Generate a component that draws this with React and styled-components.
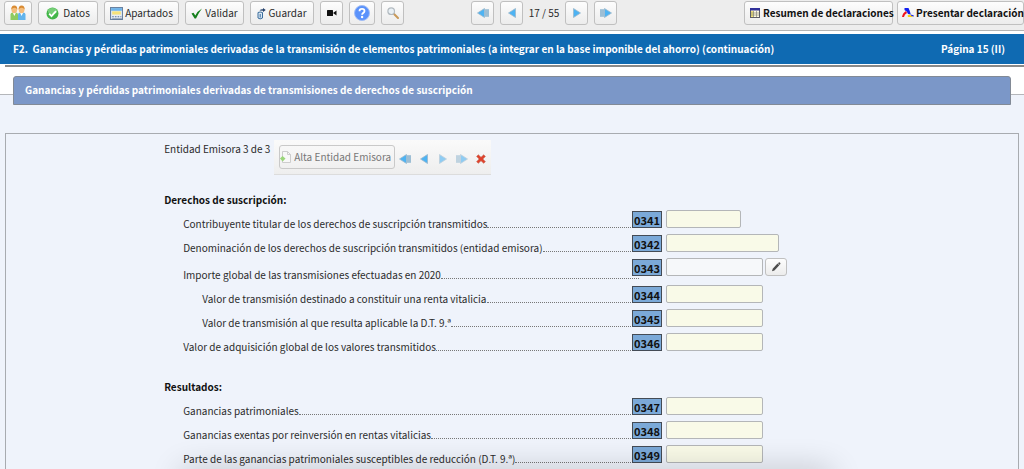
import React from "react";
import styled, { createGlobalStyle } from "styled-components";

const derechos = [
  { code: "0341", text: "Contribuyente titular de los derechos de suscripción transmitidos", width: 75 },
  { code: "0342", text: "Denominación de los derechos de suscripción transmitidos (entidad emisora)", width: 113 },
  { code: "0343", text: "Importe global de las transmisiones efectuadas en 2020", width: 97, edit: true },
  { code: "0344", text: "Valor de transmisión destinado a constituir una renta vitalicia", width: 97, level: 2 },
  { code: "0345", text: "Valor de transmisión al que resulta aplicable la D.T. 9.ª", width: 97, level: 2 },
  { code: "0346", text: "Valor de adquisición global de los valores transmitidos", width: 97 },
];

const resultados = [
  { code: "0347", text: "Ganancias patrimoniales", width: 97 },
  { code: "0348", text: "Ganancias exentas por reinversión en rentas vitalicias", width: 97 },
  { code: "0349", text: "Parte de las ganancias patrimoniales susceptibles de reducción (D.T. 9.ª)", width: 97 },
];

const UsersIcon = () => (
  <svg width="16" height="16" viewBox="0 0 16 16">
    <path d="M0.500 15V9.500Q0.500 7.500 3 7.500H5.500Q8 7.500 8 9.500V15Z" fill="#8ecb62" />
    <path d="M8 15V9.500Q8 7.500 10.500 7.500H13Q15.500 7.500 15.500 9.500V15Z" fill="#62b4ec" />
    <path d="M3 8l1.300 3L5.800 8ZM10.200 8l1.300 3L13 8Z" fill="#fff" />
    <ellipse cx="4.300" cy="4.600" rx="2.900" ry="3.700" fill="#f4bd7c" />
    <ellipse cx="11.600" cy="4.600" rx="2.900" ry="3.700" fill="#f4bd7c" />
    <path d="M1.300 4.500Q1.300 0.500 4.300 0.500T7.300 4.500Q6 2.600 4.300 2.800T1.300 4.500ZM8.600 4.500Q8.600 0.500 11.600 0.500T14.600 4.500Q13.300 2.600 11.600 2.800T8.600 4.500Z" fill="#d98b33" />
  </svg>
);

const OkIcon = () => (
  <svg width="13" height="13" viewBox="0 0 13 13">
    <circle cx="6.500" cy="6.500" r="6" fill="#43b649" />
    <ellipse cx="6.500" cy="4" rx="4.600" ry="3" fill="#8bd98b" opacity=".7" />
    <path d="M3.200 6.700l2.300 2.400 4.500-4.900" fill="none" stroke="#fff" strokeWidth="1.900" />
  </svg>
);

const SectionsIcon = () => (
  <svg width="13" height="13" viewBox="0 0 12 12">
    <rect x=".5" y=".5" width="11" height="11" fill="#e8eef6" stroke="#6a82a0" />
    <path d="M1 1h10v2.500H1z" fill="#6db2e8" />
    <path d="M2 4h8v3H2z" fill="#f5e27a" />
    <path d="M2 9h1.500M4.500 9H6M7 9h1.500M9.500 9h1M2 11h9" stroke="#5c7796" />
  </svg>
);

const CheckIcon = () => (
  <svg width="12" height="11" viewBox="0 0 12 11">
    <path d="M0.500 5.500L2.500 4.800 4.300 7.600Q6.500 3 11 0.500 7.500 5 5 10.500H3.600Z" fill="#15801c" />
  </svg>
);

const SaveIcon = () => (
  <svg width="9" height="13" viewBox="0 0 9 13">
    <path d="M1 5.500Q3 4.500 5.500 5.500V11Q3 12.800 1 11Z" fill="#d9e8f4" stroke="#3a6c9c" />
    <path d="M3.200 7V10.500" stroke="#3a6c9c" />
    <path d="M2.500 3.500Q4 1.800 6 2.300V1L8.700 3 6 5V3.700Z" fill="#25416b" />
  </svg>
);

const VideoIcon = () => (
  <svg width="10" height="6" viewBox="0 0 10 6">
    <rect width="6" height="6" rx=".5" fill="#111" />
    <path d="M6 3L9.500 0.500V5.500Z" fill="#111" />
  </svg>
);

const HelpIcon = () => (
  <svg width="16" height="16" viewBox="0 0 16 16">
    <circle cx="8" cy="8" r="7.500" fill="#5a92fb" stroke="#9fbcf5" />
    <path d="M5.500 6.200Q5.500 3.900 8 3.900T10.500 6Q10.500 7.100 9.300 7.900 8.100 8.600 8.100 9.800" fill="none" stroke="#fff" strokeWidth="1.800" />
    <circle cx="8.100" cy="12" r="1.200" fill="#fff" />
  </svg>
);

const SearchIcon = () => (
  <svg width="12" height="12" viewBox="0 0 12 12">
    <path d="M6.300 6.300L11 11" stroke="#c99a5a" strokeWidth="2" strokeLinecap="round" />
    <circle cx="4.200" cy="4.200" r="3.300" fill="#eaf1f6" stroke="#b3bbc1" strokeWidth="1.200" />
  </svg>
);

const TableIcon = () => (
  <svg width="12" height="10" viewBox="0 0 12 10">
    <rect x="1.500" y=".5" width="9" height="9" fill="#fffbe0" stroke="#5d5d66" />
    <path d="M1 0h10v2.500H1z" fill="#32329a" />
    <path d="M2 3h2.500v6H2z" fill="#f1e37a" />
    <path d="M2 5h8M2 7h8M4.500 3v6M7.500 3v6" stroke="#77776f" strokeWidth=".6" />
  </svg>
);

const AeatIcon = () => (
  <svg width="12" height="10" viewBox="0 0 12 10">
    <path d="M2.500 0H6.500Q8 3 8.800 6.500L6 6Q5.500 3.500 2.500 2Z" fill="#1220f0" />
    <path d="M0 9Q.5 5 4 3L5 5Q2.300 6.500 2 9Z" fill="#f0141e" />
    <path d="M5.500 7.500l2-1 4 2.500H6Z" fill="#fbd313" />
    <path d="M8.500 6.500l3 .8L12 8.500 9.500 8Z" fill="#1220f0" />
  </svg>
);

// arrow used by both pagers; "bar" is the first / last variant
const Arrow = ({ flip, bar, pale }) => (
  <svg width="12" height="12" viewBox="0 0 12 12">
    <g transform={flip ? "matrix(-1 0 0 1 12 0)" : undefined} opacity={pale ? 0.6 : 1}>
      {bar && <path d="M0.500 2.500h1v7h-1zM2.500 2.500h1v7h-1z" fill="#58b8f2" stroke="#9ab7cc" strokeWidth=".8" />}
      <path d={bar ? "M4.500 1.500L11.500 6L4.500 10.500Z" : "M2.500 1.500L9.500 6L2.500 10.500Z"} fill="#4db3f3" stroke="#9ab7cc" strokeWidth=".8" />
    </g>
  </svg>
);

const AddPageIcon = () => (
  <svg width="12" height="12" viewBox="0 0 12 12">
    <path d="M2.500 .5h5l3 3v8h-8z" fill="#f8f8f8" stroke="#cdcdcd" />
    <path d="M7.500 .5v3h3" fill="none" stroke="#cdcdcd" />
    <path d="M0 7.500L2.500 5 5.500 7.500 2.700 10.500Z" fill="#9bd67c" />
  </svg>
);

const DeleteIcon = () => (
  <svg width="10" height="10" viewBox="0 0 10 10">
    <path d="M2.300 .8L5 3.300 7.700 .8 9.400 2.400 6.900 5 9.400 7.700 7.700 9.300 5 6.800 2.300 9.300 .6 7.700 3.100 5 .6 2.400Z" fill="#e0412b" stroke="#c26a58" strokeWidth=".6" />
  </svg>
);

const PencilIcon = () => (
  <svg width="10" height="10" viewBox="0 0 10 10">
    <path d="M1 9.200L1.700 6.800 6.500 1.600 8.300 3.300 3.400 8.500ZM7 1.200L7.800 .4Q8.300 .1 8.800 .6L9.300 1.100Q9.700 1.600 9.300 2.100L8.700 2.900Z" fill="#4c4c4c" />
  </svg>
);

function FormRow({ row }) {
  const id = `casilla-${row.code}`;
  return (
    <Row $tall={row.edit}>
      <Concept $level={row.level || 1}>
        <label htmlFor={id}>{row.text}</label>
        <Leader />
      </Concept>
      <Code>{row.code}</Code>
      <Field id={id} type="text" $width={row.width} $editable={row.edit} readOnly={!row.edit} />
      {row.edit && (
        <EditButton type="button" aria-label="Editar">
          <PencilIcon />
        </EditButton>
      )}
    </Row>
  );
}

export default function App() {
  return (
    <Page>
      <GlobalStyle />
      <Toolbar>
        <Group>
          <ToolButton $width={28} aria-label="Contribuyentes"><UsersIcon /></ToolButton>
          <ToolButton $width={60} $gap={4}><OkIcon />Datos</ToolButton>
          <ToolButton $width={75} $gap={2}><SectionsIcon />Apartados</ToolButton>
          <ToolButton $width={59} $gap={2}><CheckIcon />Validar</ToolButton>
          <ToolButton $width={64} $gap={2}><SaveIcon />Guardar</ToolButton>
          <ToolButton $width={23} aria-label="Vídeo"><VideoIcon /></ToolButton>
          <ToolButton $width={26} aria-label="Ayuda"><HelpIcon /></ToolButton>
          <ToolButton $width={23} aria-label="Buscar"><SearchIcon /></ToolButton>
        </Group>
        <Group>
          <ToolButton $width={23} aria-label="Primera página"><Arrow flip bar /></ToolButton>
          <ToolButton $width={23} aria-label="Página anterior"><Arrow flip /></ToolButton>
          <Counter>17 / 55</Counter>
          <ToolButton $width={23} aria-label="Página siguiente"><Arrow /></ToolButton>
          <ToolButton $width={23} aria-label="Última página"><Arrow bar /></ToolButton>
        </Group>
        <Group $tight>
          <ActionButton $width={149}><TableIcon />Resumen de declaraciones</ActionButton>
          <ActionButton $width={127}><AeatIcon />Presentar declaración</ActionButton>
        </Group>
      </Toolbar>

      <PageHeader>
        <PageTitle>F2.&nbsp; Ganancias y pérdidas patrimoniales derivadas de la transmisión de elementos patrimoniales (a integrar en la base imponible del ahorro) (continuación)</PageTitle>
        <span>Página 15 (II)</span>
      </PageHeader>
      <Rule />

      <Section>
        <SectionTitle>Ganancias y pérdidas patrimoniales derivadas de transmisiones de derechos de suscripción</SectionTitle>
        <Panel>
          <EntityBar>
            <EntityLabel>Entidad Emisora 3 de 3</EntityLabel>
            <EntityTools>
              <AddButton type="button"><AddPageIcon />Alta Entidad Emisora</AddButton>
              <IconButton type="button" aria-label="Primera"><Arrow flip bar /></IconButton>
              <IconButton type="button" aria-label="Anterior"><Arrow flip /></IconButton>
              <IconButton type="button" aria-label="Siguiente"><Arrow pale /></IconButton>
              <IconButton type="button" aria-label="Última"><Arrow bar pale /></IconButton>
              <IconButton type="button" aria-label="Eliminar"><DeleteIcon /></IconButton>
            </EntityTools>
          </EntityBar>
          <GroupTitle>Derechos de suscripción:</GroupTitle>
          {derechos.map((row) => (
            <FormRow key={row.code} row={row} />
          ))}
          <GroupTitle $spaced>Resultados:</GroupTitle>
          {resultados.map((row) => (
            <FormRow key={row.code} row={row} />
          ))}
        </Panel>
      </Section>
      <BottomShade />
    </Page>
  );
}

const GlobalStyle = createGlobalStyle`
  * {
    box-sizing: border-box;
  }
  html {
    overflow: hidden;
  }
  body {
    margin: 0;
    background: #fff;
  }
  body, button, input {
    font-family: "Noto Sans CJK SC", "Noto Sans", sans-serif;
    font-size: 10px;
    line-height: 16px;
    color: #2b2b2b;
  }
  svg {
    flex: none;
    display: block;
  }
`;

const Page = styled.div`
  height: 100vh;
  display: flex;
  flex-direction: column;
  overflow: hidden;
`;

const Toolbar = styled.div`
  flex: none;
  display: grid;
  grid-template-columns: 46% 1fr auto;
  padding: 1px 0 5px;
  background: #ededed;
  border-bottom: 1px solid #b4b4b4;
`;

const Group = styled.div`
  display: flex;
  align-items: center;
  gap: ${(props) => (props.$tight ? "4px" : "6px")};

  &:first-child {
    padding-left: 4px;
  }
`;

const ToolButton = styled.button.attrs({ type: "button" })`
  flex: none;
  display: flex;
  align-items: center;
  justify-content: center;
  gap: ${(props) => props.$gap || 0}px;
  width: ${(props) => props.$width}px;
  height: 24px;
  padding: 0;
  border: 1px solid #c0c0c0;
  border-radius: 3px;
  background: linear-gradient(#fdfdfd, #ececec);
  white-space: nowrap;
`;

const ActionButton = styled(ToolButton)`
  justify-content: flex-start;
  gap: 2px;
  padding-left: 4px;
  font-weight: bold;
  color: #111;
`;

const Counter = styled.span`
  margin: 0 -3px;
  width: 36px;
  text-align: center;
  white-space: nowrap;
`;

const PageHeader = styled.header`
  flex: none;
  display: flex;
  align-items: center;
  justify-content: space-between;
  height: 30px;
  margin-top: 3px;
  padding: 0 19px 0 13px;
  background: #0f6ab2;
  color: #fff;
  font-weight: bold;
  white-space: nowrap;
`;

const PageTitle = styled.h1`
  margin: 0;
  font-size: 10px;
`;

const Rule = styled.div`
  flex: none;
  height: 2px;
  margin: 1px 0 0 5px;
  background: #8a8a8a;
`;

const Section = styled.section`
  flex: 1 0 auto;
  margin-top: 27px;
  padding: 0 5px;
  border-top: 1px solid #b4b6ba;
  background: #eff3fb;
`;

const SectionTitle = styled.h2`
  margin: -19px 8px 0;
  padding: 5px 11px 6px;
  border: 1px solid #828a96;
  border-radius: 3px 3px 0 0;
  background: #7b97c8;
  color: #fff;
  font-size: 10px;
`;

const Panel = styled.div`
  margin-top: 28px;
  padding: 6px 0 40px 15.6%;
  border: 1px solid #a8abb0;
`;

const EntityBar = styled.div`
  display: flex;
  align-items: flex-start;
`;

const EntityLabel = styled.span`
  width: 110px;
  padding-top: 1px;
`;

const EntityTools = styled.div`
  display: flex;
  align-items: center;
  height: 35px;
  padding: 0 1px 0 5px;
  border-bottom: 1px solid #dcdcdc;
  background: linear-gradient(#fafafa, #eeeeee);
`;

const AddButton = styled.button`
  display: flex;
  align-items: center;
  width: 116px;
  height: 24px;
  gap: 2px;
  padding: 0;
  border: 1px solid #c9c9c9;
  border-radius: 3px;
  background: transparent;
  color: #777;
  white-space: nowrap;
`;

const IconButton = styled.button`
  display: flex;
  justify-content: center;
  width: 19px;
  padding: 3px 0 0;
  border: 0;
  background: none;
`;

const GroupTitle = styled.h3`
  margin: ${(props) => (props.$spaced ? "22px 0 2px" : "17px 0 2px")};
  font-size: 10px;
  color: #111;
`;

const Row = styled.div`
  display: flex;
  align-items: flex-start;
  height: ${(props) => (props.$tall ? 27 : 24)}px;

  & > :first-child {
    padding-top: ${(props) => (props.$tall ? 9 : 6)}px;
  }
`;

const Concept = styled.div`
  flex: none;
  display: flex;
  align-items: baseline;
  width: 55.6%;
  padding-left: ${(props) => props.$level * 19}px;
  white-space: nowrap;
`;

const Leader = styled.span`
  flex: 1;
  height: 1px;
  border-bottom: 1px dotted #777;
`;

const Code = styled.span`
  flex: none;
  width: 30px;
  height: 17px;
  margin: 1px 0 0 -7px;
  border: 1px solid #444b55;
  background: #7ba9d8;
  color: #111;
  font-size: 11px;
  font-weight: bold;
  text-align: center;
`;

const Field = styled.input`
  flex: none;
  width: ${(props) => props.$width}px;
  height: 18px;
  margin-left: 4px;
  padding: 0 3px;
  border: 1px solid #b4b6b8;
  border-radius: 2px;
  background: ${(props) => (props.$editable ? "#f6f8fa" : "#f9fae8")};
`;

const EditButton = styled.button`
  display: flex;
  align-items: center;
  justify-content: center;
  width: 22px;
  height: 18px;
  margin-left: 2px;
  padding: 0;
  border: 1px solid #c0c0c0;
  border-radius: 3px;
  background: linear-gradient(#fdfdfd, #ececec);
`;

const BottomShade = styled.div`
  position: fixed;
  bottom: -20px;
  left: 18%;
  right: 19%;
  height: 16px;
  box-shadow: 0 0 32px 2px rgba(0, 0, 0, 0.24);
  pointer-events: none;
`;
